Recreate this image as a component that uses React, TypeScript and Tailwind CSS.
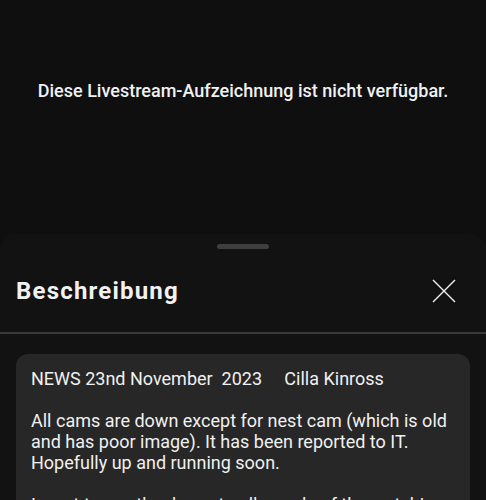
export default function App() {
  return (
    <div className="w-[486px] h-[500px] overflow-hidden bg-[#0f0f0f] text-white" style={{ fontFamily: "Roboto, 'Noto Sans', sans-serif" }}>
      <div className="h-[234px] pt-[79px] text-center">
        <p className="text-[18px] leading-[24px] font-medium text-[#f1f1f1]">Diese Livestream-Aufzeichnung ist nicht verfügbar.</p>
      </div>
      <div className="rounded-t-[16px] bg-[#121212] pt-[10px]">
        <div className="flex justify-center">
          <div className="w-[52px] h-[5px] rounded-full bg-[#3e3e3e]" />
        </div>
        <div className="h-[83px] flex items-center justify-between pl-4 pr-[30px]">
          <h2 className="text-[24px] leading-[30px] font-bold tracking-[0.05em] text-[#f1f1f1]">Beschreibung</h2>
          <svg width="24" height="24" viewBox="0 0 24 24" className="text-[#f1f1f1]">
            <path d="M1 1 L23 23 M23 1 L1 23" stroke="currentColor" strokeWidth="1.4" fill="none" />
          </svg>
        </div>
        <div className="h-[2px] bg-[#3a3a3a]" />
        <div className="px-4 pt-[20px]">
          <div className="rounded-[12px] bg-[#272727] px-[15px] pt-[14px] pb-4 text-[18px] leading-[21px] text-[#f1f1f1]">
            <p className="whitespace-pre">NEWS 23nd November  2023     Cilla Kinross</p>
            <p className="mt-[21px]">All cams are down except for nest cam (which is old and has poor image). It has been reported to IT. Hopefully up and running soon.</p>
            <p className="mt-[21px]">I want to say thank you to all people of the watching chat who keep us posted.</p>
          </div>
        </div>
      </div>
    </div>
  );
}
